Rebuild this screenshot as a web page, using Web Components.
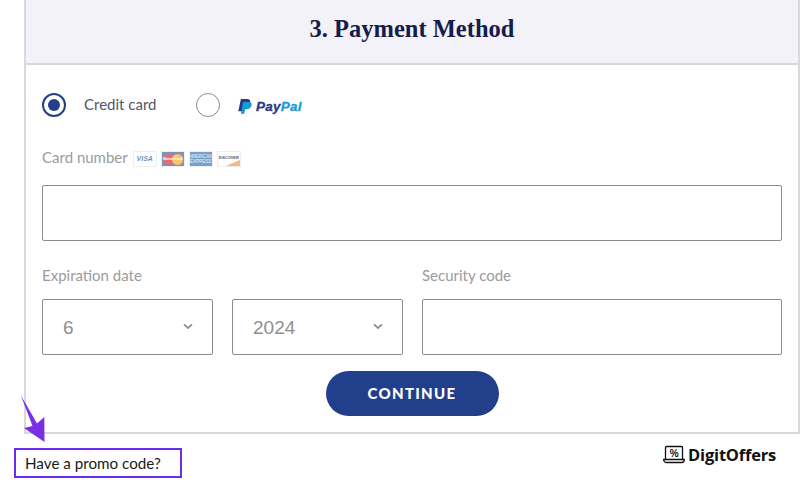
<!DOCTYPE html>
<html>
<head>
    <title>Payment Method</title>
    <style>
        html, body { margin: 0; background: #fff; }
        body { width: 802px; height: 482px; overflow: hidden; font-family: Lato, "Liberation Sans", sans-serif; position: relative; }
    </style>
</head>
<body>
    <payment-panel heading="3. Payment Method">
        <method-row></method-row>
        <field-label style="margin-top: 30px">Card number<card-badges></card-badges></field-label>
        <text-box style="margin-top: 18px"></text-box>
        <expiry-grid style="margin-top: 24px"></expiry-grid>
        <continue-button>CONTINUE</continue-button>
    </payment-panel>
    <page-footer></page-footer>

    <script>
        // Small helper so each element only has to give its markup
        function shadowElement(name, markup) {
            customElements.define(name, class extends HTMLElement {
                constructor() {
                    super();
                    this.attachShadow({ mode: 'open' }).innerHTML = markup;
                }
            });
        }

        customElements.define('payment-panel', class extends HTMLElement {
            constructor() {
                super();
                const shadow = this.attachShadow({ mode: 'open' });
                shadow.innerHTML = `
                    <style>
                        :host { display: block; box-sizing: border-box; width: 776px; height: 434px; margin-left: 24px;
                                border: 2px solid #d9d9db; border-top: 0; }
                        h2 { margin: 0; height: 65px; box-sizing: border-box; border-bottom: 2px solid #d8d8dc; background: #f2f2f8;
                             display: flex; align-items: center; justify-content: center; padding-bottom: 5px;
                             font: bold 24.5px "Liberation Serif", serif; color: #171c4a; }
                        .body { padding: 28px 16px 0 16px; display: flex; flex-direction: column; }
                    </style>
                    <h2></h2>
                    <div class="body"><slot></slot></div>`;
                shadow.querySelector('h2').textContent = this.getAttribute('heading');
            }
        });

        shadowElement('method-row', `
            <style>
                :host { display: flex; align-items: center; height: 24px; color: #54575f; font-size: 15px; }
                .radio { box-sizing: border-box; width: 24px; height: 24px; border-radius: 50%; border: 1px solid #8b8b8b; flex: none; }
                .radio.on { border: 2px solid #223f8c; display: flex; align-items: center; justify-content: center; }
                .radio.on::after { content: ""; width: 12px; height: 12px; border-radius: 50%; background: #223f8c; }
                .text { margin-left: 18px; width: 112px; position: relative; top: -1px; }
                .logo { display: flex; align-items: center; margin-left: 18px; gap: 4px; position: relative; top: 1px; }
                .pp { font: italic bold 13.5px "Liberation Sans", sans-serif; color: #253b80; letter-spacing: 0.25px; -webkit-text-stroke: 0.3px currentColor; }
                .pp b { color: #179bd7; }
            </style>
            <span class="radio on"></span><span class="text">Credit card</span>
            <span class="radio"></span>
            <span class="logo">
                <svg width="14" height="15" viewBox="0 0 14 15">
                    <path fill="#253b80" d="M2.900 0h5.800C11.600 0 12.800 1.500 12.300 3.600 11.700 6.200 9.800 7.400 7 7.400H5L4.100 12.300H0.300z"/>
                    <path fill="#179bd7" d="M5.100 3h5c3.100 0 3.900 1.500 3.500 3.500-.6 2.400-2.400 3.700-5.200 3.700H7.100L6.300 14.700H2.900z"/>
                </svg>
                <span class="pp">Pay<b>Pal</b></span>
            </span>`);

        shadowElement('field-label', `
            <style>
                :host { display: flex; align-items: center; height: 20px; color: #9b9b9b; font-size: 15px; }
            </style>
            <slot></slot>`);

        shadowElement('card-badges', `
            <style>
                :host { display: flex; gap: 4px; margin-left: 5px; margin-top: 3px; }
                .c { box-sizing: border-box; width: 24px; height: 16px; border: 1px solid #eee; position: relative; overflow: hidden;
                     display: flex; align-items: center; justify-content: center; text-align: center; background: #fff;
                     font-family: "Liberation Sans", sans-serif; }
                .visa { font: italic bold 7px "Liberation Sans", sans-serif; color: #6f94c0; }
                .visa::first-letter { color: #e0b060; }
                .mc { background: #8391b8; }
                .mc i { position: absolute; top: 2px; width: 11px; height: 11px; border-radius: 50%; }
                .mc i.r { left: 2px; background: #ea6a70; }
                .mc i.y { left: 10px; background: #f6c669; }
                .mc span { position: relative; font: bold 3.500px "Liberation Sans", sans-serif; color: #fff; }
                .amex { background: #76a0cc; color: #eef4fa; font-size: 4.500px; line-height: 5px; }
                .disc { font: bold 3.800px "Liberation Sans", sans-serif; color: #555; padding-bottom: 2px; }
                .disc::after { content: ""; position: absolute; right: 0; bottom: 0; border-style: solid; border-width: 0 0 6px 14px;
                               border-color: transparent transparent #f7b77e transparent; }
            </style>
            <span class="c visa">VISA</span>
            <span class="c mc"><i class="r"></i><i class="y"></i><span>MasterCard</span></span>
            <span class="c amex">AMERICAN<br>EXPRESS</span>
            <span class="c disc">DISCOVER</span>`);

        shadowElement('text-box', `
            <style>
                :host { display: block; box-sizing: border-box; height: 56px; border: 1px solid #8b8b8b; border-radius: 2px; }
            </style>`);

        customElements.define('select-box', class extends HTMLElement {
            constructor() {
                super();
                this.attachShadow({ mode: 'open' }).innerHTML = `
                    <style>
                        :host { display: flex; align-items: center; justify-content: space-between; box-sizing: border-box; height: 56px;
                                border: 1px solid #8b8b8b; border-radius: 2px; padding: 1px 19px 0 20px; color: #8f8f8f;
                                font: 19px "Liberation Sans", sans-serif; }
                        svg { display: block; margin-top: -3px; }
                    </style>
                    <slot></slot>
                    <svg width="10" height="7" viewBox="0 0 10 7"><path d="M1 1.300 5 5 9 1.300" fill="none" stroke="#8f8f8f" stroke-width="1.800"/></svg>`;
            }
        });

        shadowElement('expiry-grid', `
            <style>
                :host { display: grid; grid-template-columns: 171px 171px 1fr; column-gap: 19px; row-gap: 14px; }
                .lab { height: 20px; line-height: 20px; color: #9b9b9b; font-size: 15px; }
                .wide { grid-column: span 2; }
            </style>
            <div class="lab wide">Expiration date</div>
            <div class="lab">Security code</div>
            <select-box>6</select-box>
            <select-box>2024</select-box>
            <text-box></text-box>`);

        shadowElement('continue-button', `
            <style>
                :host { display: flex; align-items: center; justify-content: center; align-self: center; margin-top: 16px;
                        box-sizing: border-box; padding-bottom: 2px;
                        width: 173px; height: 45px; border-radius: 23px; background: #223f8c; color: #fff;
                        font: 900 15px Lato, sans-serif; letter-spacing: 1.300px; }
            </style>
            <slot></slot>`);

        shadowElement('page-footer', `
            <style>
                :host { display: flex; justify-content: space-between; align-items: flex-start; padding: 14px 26px 0 14px; }
                .promo { box-sizing: border-box; width: 168px; height: 30px; border: 2px solid #6b2df0; padding-left: 9px;
                         display: flex; align-items: center; font-size: 15.200px; color: #1a1a1a; }
                .brand { display: flex; align-items: center; gap: 3px; margin-top: -5px; font: bold 16.500px "Open Sans", sans-serif; color: #111; letter-spacing: -0.2px; }
                svg.arrow { position: absolute; left: 0; top: 385px; }
            </style>
            <div class="promo">Have a promo code?</div>
            <div class="brand">
                <svg width="22" height="19" viewBox="0 0 22 19">
                    <path d="M2.500 14V2.500a1 1 0 0 1 1-1h15a1 1 0 0 1 1 1V14" fill="#fff" stroke="#111" stroke-width="1.300"/>
                    <path d="M0.700 14.500h20.600c0 1.800-1 3-2.400 3H3.100c-1.400 0-2.400-1.200-2.400-3z" fill="#fff" stroke="#111" stroke-width="1.300"/>
                    <text x="11" y="12" text-anchor="middle" font-family="Liberation Sans, sans-serif" font-weight="bold" font-size="10" fill="#111">%</text>
                </svg>
                <span>DigitOffers</span>
            </div>
            <svg class="arrow" width="50" height="60" viewBox="0 0 50 60">
                <path d="M20.700 10 37 38.500 44.300 32 44.500 57 24 43 32.500 41z" fill="#7a2ee6"/>
            </svg>`);
    </script>
</body>
</html>
